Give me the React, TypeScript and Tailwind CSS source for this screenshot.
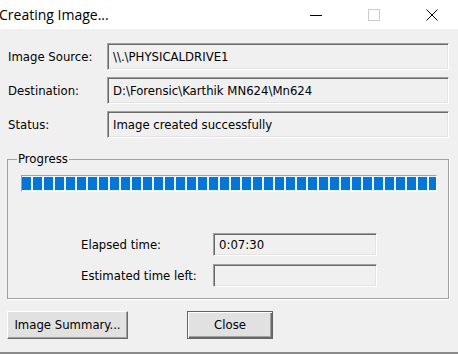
import React from "react";

const F = { fontFamily: '"DejaVu Sans Condensed", Tahoma, "DejaVu Sans", sans-serif' };

function Field({ text, w, h }: { text: string; w: string; h: string }) {
  return (
    <div
      className={`${w} ${h} flex items-center pl-[5px] bg-[#f0f0f0] border border-t-[#a0a0a0] border-l-[#a0a0a0] border-r-white border-b-white shadow-[inset_1px_1px_0_#696969,inset_-1px_-1px_0_#e3e3e3] text-[13px] text-black`}
    >
      {text}
    </div>
  );
}

export default function App() {
  const blocks = Array.from({ length: 38 });
  return (
    <div className="w-[458px] h-[354px] bg-[#f0f0f0] flex flex-col overflow-hidden" style={F}>
      {/* Title bar */}
      <div className="h-[29px] bg-white flex items-center shrink-0">
        <div className="flex-1 text-[14px] text-black leading-none -ml-[1px]" style={{ fontFamily: '"Open Sans", "Noto Sans", sans-serif' }}>
          Creating Image...
        </div>
        <div className="flex items-center h-full">
          <div className="w-[46px] h-full flex items-center justify-center">
            <svg width="12" height="12" viewBox="0 0 12 12"><path d="M0 6.5h12" stroke="#000" strokeWidth="1" /></svg>
          </div>
          <div className="w-[12px]" />
          <div className="w-[46px] h-full flex items-center justify-center">
            <svg width="12" height="12" viewBox="0 0 12 12"><rect x="0.5" y="0.5" width="11" height="11" fill="none" stroke="#cccccc" /></svg>
          </div>
          <div className="w-[12px]" />
          <div className="w-[46px] h-full flex items-center justify-center">
            <svg width="12" height="12" viewBox="0 0 12 12"><path d="M0.5 0.5L11.5 11.5M11.5 0.5L0.5 11.5" stroke="#000" strokeWidth="1" /></svg>
          </div>
          <div className="w-[3px]" />
        </div>
      </div>

      {/* Body */}
      <div className="flex flex-col pt-[14px]">
        <div className="flex flex-col gap-[7px]">
          {[
            ["Image Source:", "\\\\.\\PHYSICALDRIVE1"],
            ["Destination:", "D:\\Forensic\\Karthik MN624\\Mn624"],
            ["Status:", "Image created successfully"],
          ].map(([l, v]) => (
            <div key={l} className="flex items-center">
              <div className="w-[107px] pl-[8px] text-[13px] text-black">{l}</div>
              <Field text={v} w="w-[342px]" h="h-[27px]" />
            </div>
          ))}
        </div>

        <fieldset className="mt-[14px] ml-[7px] w-[442px] h-[147px] border border-[#a0a0a0] shadow-[1px_1px_0_#fff] pt-0">
          <legend className="ml-[9px] px-[1px] text-[13px] text-black leading-[14px]">Progress</legend>
          <div className="ml-[13px] mt-[9px] w-[416px] h-[17px] bg-[#e8f6fb] border border-t-[#a0a0a0] border-l-[#a0a0a0] border-r-white border-b-white py-[1px] overflow-hidden flex gap-[2px]">
            {blocks.map((_, i) => (
              <div key={i} className="w-[9px] h-full bg-[#0676d6] shrink-0" />
            ))}
          </div>
          <div className="mt-[41px] flex flex-col gap-[8px]">
            <div className="flex items-center">
              <div className="w-[205px] pl-[73px] text-[13px] text-black">Elapsed time:</div>
              <Field text="0:07:30" w="w-[164px]" h="h-[23px]" />
            </div>
            <div className="flex items-center">
              <div className="w-[205px] pl-[73px] text-[13px] text-black">Estimated time left:</div>
              <Field text="" w="w-[164px]" h="h-[23px]" />
            </div>
          </div>
        </fieldset>

        <div className="mt-[12px] flex items-center pl-[7px]">
          <button className="w-[121px] h-[28px] bg-[#e1e1e1] border border-t-white border-l-white border-r-[#696969] border-b-[#696969] shadow-[inset_-1px_-1px_0_#a0a0a0] text-[13px] text-black">
            Image Summary...
          </button>
          <button className="ml-[59px] w-[86px] h-[28px] bg-[#e1e1e1] border border-[#646464] shadow-[inset_1px_1px_0_#fff,inset_-1px_-1px_0_#696969,inset_-2px_-2px_0_#a0a0a0] text-[13px] text-black">
            Close
          </button>
        </div>
      </div>
      <div className="mt-auto h-[2px] bg-[#8a8a8a]" />
    </div>
  );
}
